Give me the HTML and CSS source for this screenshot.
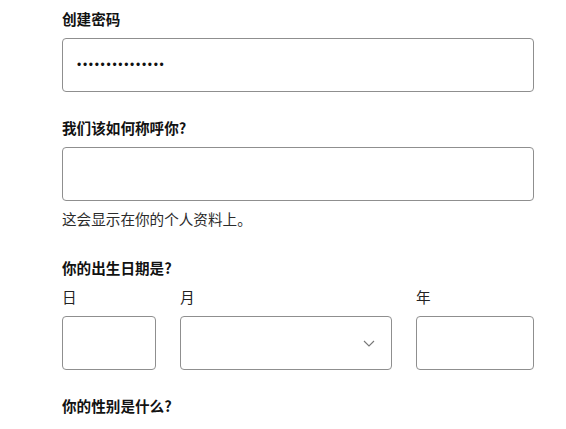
FILE: index.html
```html
<!DOCTYPE html>
<html lang="zh-CN">
<head>
    <meta charset="UTF-8">
    <title>注册</title>
    <link rel="stylesheet" href="styles.css">
</head>
<body>
<form class="signup">
    <div class="field">
        <label class="title" for="pwd">创建密码</label>
        <input class="box pwd" id="pwd" type="password" value="abcdefghijklmno">
    </div>
    <div class="field">
        <label class="title" for="name">我们该如何称呼你?</label>
        <input class="box" id="name" type="text">
        <p class="hint">这会显示在你的个人资料上。</p>
    </div>
    <div class="field">
        <div class="title">你的出生日期是?</div>
        <div class="dates">
            <div class="col">
                <label class="sub" for="day">日</label>
                <input class="box" id="day" type="text">
            </div>
            <div class="col">
                <label class="sub" for="month">月</label>
                <div class="pick">
                    <select class="box" id="month">
                        <option></option>
                    </select>
                    <svg class="arrow" width="12" height="7" viewBox="0 0 12 7">
                        <path d="M1 1 L6 6 L11 1" fill="none" stroke="#777" stroke-width="1.1"/>
                    </svg>
                </div>
            </div>
            <div class="col">
                <label class="sub" for="year">年</label>
                <input class="box" id="year" type="text">
            </div>
        </div>
    </div>
    <div class="field">
        <div class="title">你的性别是什么?</div>
    </div>
</form>
</body>
</html>
```

FILE: styles.css
```css
body{
    margin: 0;
    background: #fff;
    font-family: "Noto Sans CJK SC", "Noto Sans", sans-serif;
    color: #121212;
}
.signup{
    width: 472px;
    padding: 9px 0 0 62px;
}
.field{
    display: flex;
    flex-direction: column;
    margin-bottom: 26px;
}
.field:last-child{
    margin-bottom: 0;
}
.title{
    font-size: 14.6px;
    line-height: 20px;
    font-weight: 700;
    margin-bottom: 9px;
}
.box{
    box-sizing: border-box;
    width: 100%;
    height: 54px;
    margin: 0;
    border: 1px solid #8f8f8f;
    border-radius: 4px;
    background: #fff;
    font-size: 14px;
    padding: 0 14px;
    outline: none;
}
.pwd{
    font-family: "Liberation Sans", sans-serif;
    font-size: 12px;
    letter-spacing: 1.7px;
    color: #111;
}
.hint{
    margin: 8px 0 3px;
    font-size: 14.6px;
    line-height: 20px;
    color: #2b2b2b;
}
.dates{
    display: grid;
    grid-template-columns: 94px 212px 1fr;
    column-gap: 24px;
}
.col{
    display: flex;
    flex-direction: column;
    gap: 9px;
}
.sub{
    font-size: 14.6px;
    line-height: 20px;
    color: #222;
}
.pick{
    position: relative;
}
.pick select{
    appearance: none;
    -webkit-appearance: none;
}
.arrow{
    position: absolute;
    right: 17px;
    top: 24px;
    pointer-events: none;
}
```
